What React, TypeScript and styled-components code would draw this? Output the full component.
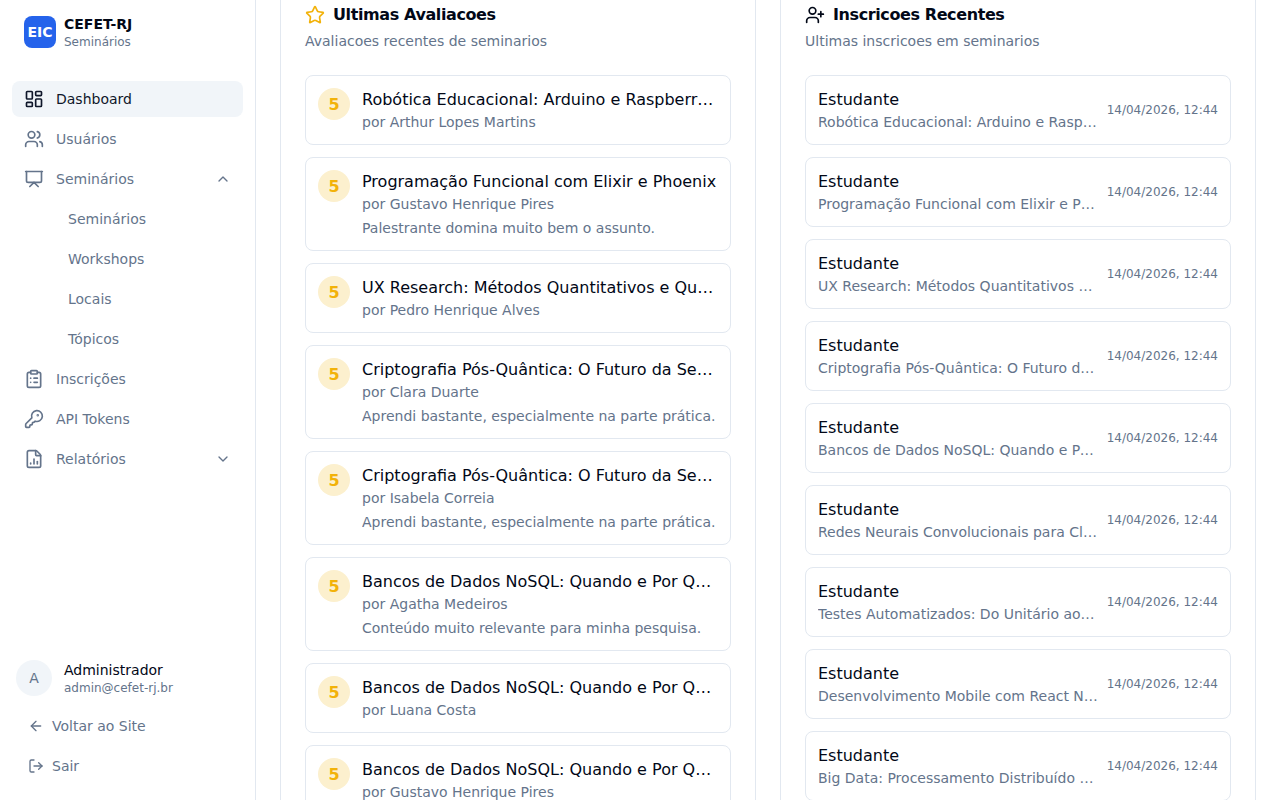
import { createGlobalStyle, styled } from "styled-components";
import {
  ArrowLeft,
  ChevronDown,
  ChevronUp,
  ClipboardList,
  FileChartColumn,
  KeyRound,
  LayoutDashboard,
  LogOut,
  Presentation,
  Star,
  UserPlus,
  Users,
} from "lucide-react";

const reviews = [
  { score: 5, title: "Robótica Educacional: Arduino e Raspberry Pi na Sala de Aula", author: "Arthur Lopes Martins" },
  { score: 5, title: "Programação Funcional com Elixir e Phoenix", author: "Gustavo Henrique Pires", comment: "Palestrante domina muito bem o assunto." },
  { score: 5, title: "UX Research: Métodos Quantitativos e Qualitativos", author: "Pedro Henrique Alves" },
  { score: 5, title: "Criptografia Pós-Quântica: O Futuro da Segurança", author: "Clara Duarte", comment: "Aprendi bastante, especialmente na parte prática." },
  { score: 5, title: "Criptografia Pós-Quântica: O Futuro da Segurança", author: "Isabela Correia", comment: "Aprendi bastante, especialmente na parte prática." },
  { score: 5, title: "Bancos de Dados NoSQL: Quando e Por Que Usar", author: "Agatha Medeiros", comment: "Conteúdo muito relevante para minha pesquisa." },
  { score: 5, title: "Bancos de Dados NoSQL: Quando e Por Que Usar", author: "Luana Costa" },
  { score: 5, title: "Bancos de Dados NoSQL: Quando e Por Que Usar", author: "Gustavo Henrique Pires" },
];

const enrollments = [
  "Robótica Educacional: Arduino e Raspberry Pi na Sala de Aula",
  "Programação Funcional com Elixir e Phoenix",
  "UX Research: Métodos Quantitativos e Qualitativos",
  "Criptografia Pós-Quântica: O Futuro da Segurança",
  "Bancos de Dados NoSQL: Quando e Por Que Usar",
  "Redes Neurais Convolucionais para Classificação de Imagens",
  "Testes Automatizados: Do Unitário ao E2E",
  "Desenvolvimento Mobile com React Native",
  "Big Data: Processamento Distribuído com Spark",
];

const GlobalStyle = createGlobalStyle`
  html, body {
    margin: 0;
    height: 100%;
    overflow: hidden;
    background: #ffffff;
    font-family: "DejaVu Sans", sans-serif;
    color: #020817;
  }
  * {
    box-sizing: border-box;
  }
`;

const Layout = styled.div`
  display: flex;
  height: 800px;
`;

const Sidebar = styled.aside`
  width: 256px;
  flex-shrink: 0;
  display: flex;
  flex-direction: column;
  border-right: 1px solid #e2e8f0;
  background: #ffffff;
`;

const Brand = styled.div`
  height: 64px;
  padding: 16px 24px;
  display: flex;
  align-items: center;
  gap: 8px;
`;

const BrandLogo = styled.div`
  width: 32px;
  height: 32px;
  border-radius: 8px;
  background: #2563eb;
  color: #ffffff;
  font-size: 14px;
  font-weight: 700;
  display: flex;
  align-items: center;
  justify-content: center;
`;

const BrandName = styled.div`
  font-size: 14px;
  font-weight: 700;
  line-height: 20px;
`;

const BrandSub = styled.div`
  font-size: 12px;
  line-height: 16px;
  color: #64748b;
`;

const Nav = styled.nav`
  flex: 1;
  padding: 17px 12px 0;
  display: flex;
  flex-direction: column;
  gap: 4px;
`;

const NavItem = styled.div<{ $active?: boolean; $sub?: boolean }>`
  height: 36px;
  padding: 0 12px 0 ${(props) => (props.$sub ? "56px" : "12px")};
  display: flex;
  align-items: center;
  gap: 12px;
  border-radius: 8px;
  font-size: 14px;
  color: ${(props) => (props.$active ? "#0f172a" : "#64748b")};
  background: ${(props) => (props.$active ? "#f1f5f9" : "transparent")};

  span {
    flex: 1;
  }
`;

const Footer = styled.div`
  padding: 0 12px 16px;
  display: flex;
  flex-direction: column;
  gap: 4px;
`;

const UserRow = styled.div`
  padding: 0 4px;
  margin-bottom: 8px;
  display: flex;
  align-items: center;
  gap: 12px;
`;

const Avatar = styled.div`
  width: 36px;
  height: 36px;
  border-radius: 50%;
  background: #f1f5f9;
  color: #64748b;
  font-size: 14px;
  display: flex;
  align-items: center;
  justify-content: center;
`;

const UserName = styled.div`
  font-size: 14px;
  line-height: 20px;
`;

const UserMail = styled.div`
  font-size: 12px;
  line-height: 16px;
  color: #64748b;
`;

const FooterLink = styled.div`
  height: 36px;
  padding: 0 16px;
  display: flex;
  align-items: center;
  gap: 8px;
  font-size: 14px;
  color: #64748b;
`;

const Main = styled.main`
  flex: 1;
  min-width: 0;
  height: 800px;
  overflow: hidden;
  padding: 0 24px;
`;

const Columns = styled.div`
  margin-top: -24px;
  display: grid;
  grid-template-columns: 1fr 1fr;
  gap: 24px;
`;

const Panel = styled.section`
  min-width: 0;
  border: 1px solid #e2e8f0;
  border-radius: 12px;
  background: #ffffff;
  padding: 24px;
`;

const PanelTitle = styled.h2`
  margin: 0;
  display: flex;
  align-items: center;
  gap: 8px;
  font-size: 16px;
  font-weight: 700;
  line-height: 28px;
  letter-spacing: -0.4px;
`;

const PanelText = styled.p`
  margin: 2px 0 0;
  font-size: 14px;
  line-height: 20px;
  color: #64748b;
`;

const List = styled.div`
  margin-top: 24px;
  display: flex;
  flex-direction: column;
  gap: 12px;
`;

const Row = styled.div`
  display: flex;
  align-items: flex-start;
  gap: 12px;
  padding: 12px;
  border: 1px solid #e2e8f0;
  border-radius: 8px;
`;

const EnrollRow = styled(Row)`
  align-items: center;
  gap: 8px;
`;

const Score = styled.div`
  width: 32px;
  height: 32px;
  flex-shrink: 0;
  border-radius: 50%;
  background: #fcf0ce;
  color: #f2b20a;
  font-size: 16px;
  font-weight: 700;
  display: flex;
  align-items: center;
  justify-content: center;
`;

const RowBody = styled.div`
  flex: 1;
  min-width: 0;
`;

const RowTitle = styled.div`
  font-size: 16px;
  line-height: 24px;
  white-space: nowrap;
  overflow: hidden;
  text-overflow: ellipsis;
`;

const RowSub = styled.div`
  font-size: 14px;
  line-height: 20px;
  color: #64748b;
  white-space: nowrap;
  overflow: hidden;
  text-overflow: ellipsis;
`;

const RowComment = styled(RowSub)`
  margin-top: 4px;
`;

const RowDate = styled.div`
  flex-shrink: 0;
  font-size: 12px;
  line-height: 16px;
  color: #64748b;
`;

export default function App() {
  return (
    <Layout>
      <GlobalStyle />
      <Sidebar>
        <Brand>
          <BrandLogo>EIC</BrandLogo>
          <div>
            <BrandName>CEFET-RJ</BrandName>
            <BrandSub>Seminários</BrandSub>
          </div>
        </Brand>
        <Nav>
          <NavItem $active>
            <LayoutDashboard size={20} />
            <span>Dashboard</span>
          </NavItem>
          <NavItem>
            <Users size={20} />
            <span>Usuários</span>
          </NavItem>
          <NavItem>
            <Presentation size={20} />
            <span>Seminários</span>
            <ChevronUp size={16} />
          </NavItem>
          <NavItem $sub>
            <span>Seminários</span>
          </NavItem>
          <NavItem $sub>
            <span>Workshops</span>
          </NavItem>
          <NavItem $sub>
            <span>Locais</span>
          </NavItem>
          <NavItem $sub>
            <span>Tópicos</span>
          </NavItem>
          <NavItem>
            <ClipboardList size={20} />
            <span>Inscrições</span>
          </NavItem>
          <NavItem>
            <KeyRound size={20} />
            <span>API Tokens</span>
          </NavItem>
          <NavItem>
            <FileChartColumn size={20} />
            <span>Relatórios</span>
            <ChevronDown size={16} />
          </NavItem>
        </Nav>
        <Footer>
          <UserRow>
            <Avatar>A</Avatar>
            <div>
              <UserName>Administrador</UserName>
              <UserMail>admin@cefet-rj.br</UserMail>
            </div>
          </UserRow>
          <FooterLink>
            <ArrowLeft size={16} />
            Voltar ao Site
          </FooterLink>
          <FooterLink>
            <LogOut size={16} />
            Sair
          </FooterLink>
        </Footer>
      </Sidebar>
      <Main>
        <Columns>
          <Panel>
            <PanelTitle>
              <Star size={20} color="#f2b20a" />
              Ultimas Avaliacoes
            </PanelTitle>
            <PanelText>Avaliacoes recentes de seminarios</PanelText>
            <List>
              {reviews.map((review, index) => (
                <Row key={index}>
                  <Score>{review.score}</Score>
                  <RowBody>
                    <RowTitle>{review.title}</RowTitle>
                    <RowSub>por {review.author}</RowSub>
                    {review.comment && <RowComment>{review.comment}</RowComment>}
                  </RowBody>
                </Row>
              ))}
            </List>
          </Panel>
          <Panel>
            <PanelTitle>
              <UserPlus size={20} />
              Inscricoes Recentes
            </PanelTitle>
            <PanelText>Ultimas inscricoes em seminarios</PanelText>
            <List>
              {enrollments.map((seminar, index) => (
                <EnrollRow key={index}>
                  <RowBody>
                    <RowTitle>Estudante</RowTitle>
                    <RowSub>{seminar}</RowSub>
                  </RowBody>
                  <RowDate>14/04/2026, 12:44</RowDate>
                </EnrollRow>
              ))}
            </List>
          </Panel>
        </Columns>
      </Main>
    </Layout>
  );
}
